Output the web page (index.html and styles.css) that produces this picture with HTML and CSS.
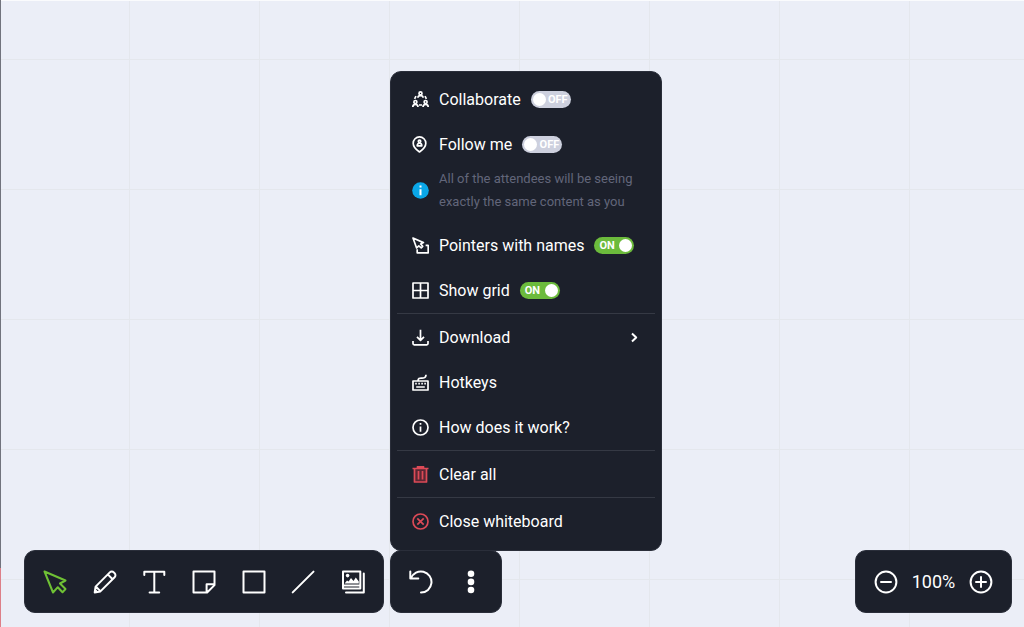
FILE: index.html
```html
<!DOCTYPE html>
<html lang="en">
<head>
    <meta charset="UTF-8">
    <meta name="viewport" content="width=device-width, initial-scale=1.0">
    <title>Whiteboard</title>
    <link rel="stylesheet" href="styles.css">
</head>
<body>
    <main class="board">
        <!-- Drawing tools -->
        <div class="panel tools">
            <button type="button" class="tool active" aria-label="Select">
                <svg viewBox="0 0 24 24"><path d="M1.5 1.5 22.5 10.5 17 13.5 22.5 19 19.5 22.3 14.8 17.2 10 22.5Z"/></svg>
            </button>
            <button type="button" class="tool" aria-label="Pencil">
                <svg viewBox="0 0 24 24"><path d="M1.7 22.4 2.6 16.6 16.8 2.4a2.8 2.8 0 0 1 4 0l.8.8a2.8 2.8 0 0 1 0 4L7.4 21.4ZM15 4.6l4.4 4.4M3 16.6l4.4 4.6"/><path class="solid" d="m1.5 22.6.6-4 3.4 3.4Z"/></svg>
            </button>
            <button type="button" class="tool" aria-label="Text">
                <svg viewBox="0 0 24 24"><path d="M2.3 5V1.7h20V5M12.3 1.7v20.8M7.6 22.5h9.6"/></svg>
            </button>
            <button type="button" class="tool" aria-label="Sticky note">
                <svg viewBox="0 0 24 24"><path d="M1.5 1.5h21v13.6l-7.4 7.4H1.5ZM22.3 14.2h-7.7v8"/></svg>
            </button>
            <button type="button" class="tool" aria-label="Shape">
                <svg viewBox="0 0 24 24"><path d="M1.5 1.5h21v21h-21z"/></svg>
            </button>
            <button type="button" class="tool" aria-label="Line">
                <svg viewBox="0 0 24 24"><path d="M1.7 22.4 22.5 1.6"/></svg>
            </button>
            <button type="button" class="tool" aria-label="Image">
                <svg viewBox="0 0 24 24"><path d="M2 1.4h17.3v17.2H2zM2 15.4h17M22.8 3.5v19H5"/><path class="solid" d="M3.6 13.6 6 10.5l1.6 1 2.4-3.6 2.5 3 2.3-3.4 3 4v2.1Z"/><circle class="solid" cx="6.6" cy="5.6" r="1.8"/></svg>
            </button>
        </div>

        <!-- History and more menu -->
        <div class="panel actions">
            <button type="button" class="tool" aria-label="Undo">
                <svg viewBox="0 0 24 24"><path d="M1.3 1.5v7h8M2 8.2A10.6 10.6 0 1 1 12 22.6"/></svg>
            </button>
            <button type="button" class="tool" aria-label="More options" aria-expanded="true">
                <svg viewBox="0 0 24 24"><g class="solid"><circle cx="12" cy="3.8" r="3.3"/><circle cx="12" cy="11.9" r="3.3"/><circle cx="12" cy="20" r="3.3"/></g></svg>
            </button>

            <div class="panel menu">
                <label class="menu-item">
                    <svg viewBox="0 0 17 17"><circle cx="8.5" cy="2.4" r="1.5"/><path d="M5.9 6.8c0-3 5.2-3 5.2 0"/><circle cx="3.4" cy="11" r="1.5"/><path d="M.8 16c0-3.6 5.2-3.6 5.2 0"/><circle cx="13.6" cy="11" r="1.5"/><path d="M11 16c0-3.6 5.2-3.6 5.2 0M4 5.2 2.6 7.8M13 5.2l1.4 2.6M7 14h3"/></svg>
                    Collaborate
                    <span class="switch"><input type="checkbox"><span class="on">ON</span><span class="off">OFF</span></span>
                </label>
                <label class="menu-item">
                    <svg viewBox="0 0 17 17"><path d="M7.5 16C4 13.6 1.2 10.8 1.2 7.2a6.3 6.3 0 0 1 12.6 0c0 3.6-2.8 6.4-6.3 8.8Z"/><circle cx="7.5" cy="5.3" r="1.2"/><path d="M5.2 9.8c0-3.6 4.6-3.6 4.6 0Z"/></svg>
                    Follow me
                    <span class="switch"><input type="checkbox"><span class="on">ON</span><span class="off">OFF</span></span>
                </label>
                <div class="menu-note">
                    <svg viewBox="0 0 17 17"><circle class="info-dot" cx="8.5" cy="8.5" r="8.3"/><path d="M8.5 7.2v6M8.5 3.6v1.9"/></svg>
                    <p>All of the attendees will be seeing exactly the same content as you</p>
                </div>
                <label class="menu-item">
                    <svg viewBox="0 0 17 17"><path d="m1 1 10.4 4.6L8.7 7l2 2.3-1.5 1.5-2.4-2L4.6 11ZM5.2 12.2v3.6h11V8.4h-2.6"/></svg>
                    Pointers with names
                    <span class="switch"><input type="checkbox" checked><span class="on">ON</span><span class="off">OFF</span></span>
                </label>
                <label class="menu-item">
                    <svg viewBox="0 0 17 17"><path d="M1 1h15v15H1zM8.5 1v15M1 8.5h15"/></svg>
                    Show grid
                    <span class="switch"><input type="checkbox" checked><span class="on">ON</span><span class="off">OFF</span></span>
                </label>
                <hr>
                <button type="button" class="menu-item">
                    <svg viewBox="0 0 17 17"><path d="M8.5.8v10.4M5 7.8l3.5 3.6L12 7.8M1 12v2.6c0 .7.5 1.2 1.2 1.2h12.6c.7 0 1.2-.5 1.2-1.2V12"/></svg>
                    Download
                    <svg class="arrow" viewBox="0 0 17 17"><path d="m6 4.5 4.2 4L6 12.5"/></svg>
                </button>
                <button type="button" class="menu-item">
                    <svg viewBox="0 0 17 17"><path d="M1 7h15v9H1zM6 7c0-4 2.5-2.6 5.5-3C13.6 3.7 14 2.5 14 .8M3.2 9.7h1.6M6.3 9.7h1.6M9.3 9.7h1.6M12.3 9.7h1.6M4.2 13h8.6"/></svg>
                    Hotkeys
                </button>
                <button type="button" class="menu-item">
                    <svg viewBox="0 0 17 17"><circle cx="8.5" cy="8.5" r="7.5"/><path d="M8.5 7.4v5.4M8.5 4v1.8"/></svg>
                    How does it work?
                </button>
                <hr>
                <button type="button" class="menu-item danger">
                    <svg viewBox="0 0 17 17"><path class="bin" d="M.5 2.5h16M5.5 2V.8h6V2M2.5 2.5V16h12V2.5M6.5 5v8.5M10.5 5v8.5"/></svg>
                    Clear all
                </button>
                <hr>
                <button type="button" class="menu-item danger">
                    <svg viewBox="0 0 17 17"><circle cx="8.5" cy="8.5" r="7.5"/><path d="m5.3 5.3 6.4 6.4M11.7 5.3l-6.4 6.4"/></svg>
                    Close whiteboard
                </button>
            </div>
        </div>

        <!-- Zoom -->
        <div class="panel zoom">
            <button type="button" class="tool" aria-label="Zoom out">
                <svg viewBox="0 0 24 24"><circle cx="12" cy="12" r="10.4"/><path d="M7 12h10"/></svg>
            </button>
            <span class="zoom-value">100%</span>
            <button type="button" class="tool" aria-label="Zoom in">
                <svg viewBox="0 0 24 24"><circle cx="12" cy="12" r="10.4"/><path d="M7 12h10M12 7v10"/></svg>
            </button>
        </div>
    </main>
</body>
</html>
```
FILE: styles.css
```css
* {
    box-sizing: border-box;
}

body {
    margin: 0;
    font-family: Roboto, "Liberation Sans", sans-serif;
    color: white;
}

.board {
    display: flex;
    align-items: flex-end;
    gap: 6px;
    min-height: 100vh;
    padding: 0 12px 14px 24px;
    background-color: #ebeef7;
    /* side strip, top edge, then the grid lines */
    background-image:
        linear-gradient(#71737d 568px, #dd7f88 568px),
        linear-gradient(#fafbfd, #fafbfd),
        linear-gradient(90deg, #e4e7ed 1px, transparent 1px),
        linear-gradient(#e4e7ed 1px, transparent 1px);
    background-size: 1px 100%, 100% 1px, 130px 130px, 130px 130px;
    background-position: 0 0, 0 0, 129px 0, 0 59px;
    background-repeat: no-repeat, no-repeat, repeat, repeat;
}

.panel {
    background-color: #1c202b;
    border: 1px solid #2a2e3a;
    border-radius: 11px;
}

.tools,
.actions,
.zoom {
    display: grid;
    align-items: center;
    height: 63px;
    padding: 0 5px;
}

.tools {
    width: 360px;
    grid-template-columns: repeat(7, 1fr);
}

.actions {
    position: relative;
    width: 112px;
    grid-template-columns: repeat(2, 1fr);
}

.zoom {
    width: 157px;
    margin-left: auto;
    grid-template-columns: 1fr auto 1fr;
}

.zoom-value {
    font-size: 18px;
}

button {
    padding: 0;
    border: none;
    background: none;
    color: inherit;
    font-family: inherit;
    cursor: pointer;
}

.tool {
    display: flex;
    justify-content: center;
    align-items: center;
    height: 48px;
}

.tool.active {
    color: #6fc135;
}

svg {
    flex: none;
    width: 17px;
    height: 17px;
    fill: none;
    stroke: currentColor;
    stroke-width: 1.7;
    stroke-linejoin: round;
}

.tool svg {
    width: 24px;
    height: 24px;
    stroke-width: 2;
    stroke-linecap: round;
}

.solid {
    fill: currentColor;
    stroke: none;
}

.menu {
    position: absolute;
    bottom: 100%;
    left: -1px;
    width: 272px;
    padding: 5px 0 6px;
}

.menu-item {
    display: flex;
    align-items: center;
    gap: 10px;
    width: 100%;
    height: 45px;
    padding: 0 18px 0 21px;
    font-size: 16px;
    cursor: pointer;
}

.menu-item .arrow {
    margin-left: auto;
    stroke-width: 2;
}

.danger svg {
    color: #dc4a57;
}

.bin {
    fill: #5a2733;
}

.menu-note {
    display: flex;
    align-items: center;
    gap: 10px;
    padding: 0 20px 10px 21px;
    font-size: 13px;
    line-height: 23px;
    color: #62667a;
}

.menu-note p {
    margin: 0;
}

.menu-note svg {
    stroke: white;
    stroke-width: 2;
}

.info-dot {
    fill: #0aa7e8;
    stroke: none;
}

hr {
    height: 1px;
    margin: 0 6px 1px;
    border: none;
    background-color: #353944;
}

.switch {
    display: grid;
    align-items: center;
    font-size: 11px;
    font-weight: bold;
}

.switch > * {
    grid-area: 1 / 1;
}

.switch input {
    appearance: none;
    display: flex;
    align-items: center;
    width: 40px;
    height: 17px;
    margin: 0;
    padding: 0 2px;
    border-radius: 9px;
    background-color: #cdd0de;
    cursor: pointer;
}

.switch input::before {
    content: "";
    width: 13px;
    height: 13px;
    border-radius: 50%;
    background-color: white;
}

.switch input:checked {
    justify-content: flex-end;
    background-color: #6cbb3c;
}

.switch span {
    pointer-events: none;
    z-index: 1;
}

.on {
    display: none;
    padding-left: 5px;
}

.off {
    padding-right: 3px;
    text-align: right;
}

input:checked ~ .on {
    display: block;
}

input:checked ~ .off {
    display: none;
}
```
